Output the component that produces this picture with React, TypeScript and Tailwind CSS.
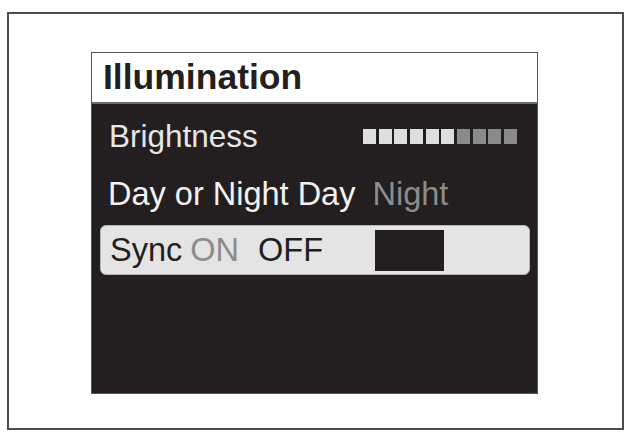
const font = { fontFamily: '"Liberation Sans", Arial, Helvetica, sans-serif' };

function BrightnessBar({ level, total }: { level: number; total: number }) {
  return (
    <div className="flex gap-[2.7px]">
      {Array.from({ length: total }).map((_, i) => (
        <div
          key={i}
          className={
            i < level
              ? "w-[13px] h-[15px] bg-[#dedede]"
              : "w-[13px] h-[15px] bg-[#8a8a8a]"
          }
        />
      ))}
    </div>
  );
}

export default function App() {
  return (
    <div className="w-[626px] h-[435px] bg-white pt-[12px] pl-[7px]" style={font}>
      <div className="w-[617px] h-[418px] border-2 border-[#4d4d4d] pl-[82px] pt-[38px]">
        {/* screen panel */}
        <div className="w-[447px] h-[342px] border border-[#555] bg-[#231f20] flex flex-col">
          <div className="h-[51px] bg-white border-b-2 border-[#6b6b6b] flex items-center pl-[11px]">
            <span className="text-[35.5px] leading-[35px] font-bold text-[#231f20]">
              Illumination
            </span>
          </div>

          <div className="mt-[11px] h-[43px] flex items-center justify-between pl-[17px] pr-[20px]">
            <span className="text-[31.5px] leading-[31px] text-[#e6e6e6]">Brightness</span>
            <BrightnessBar level={6} total={10} />
          </div>

          <div className="mt-[14px] h-[43px] flex items-center pl-[16px]">
            <span className="text-[32.5px] leading-[32px] text-[#f2f2f2]">Day or Night Day</span>
            <span className="ml-[17px] text-[32.5px] leading-[32px] text-[#8c8c8c]">Night</span>
          </div>

          <div className="mt-[10px] ml-[8px] mr-[7px] h-[50px] rounded-[6px] border border-[#b5b5b5] bg-[#e4e4e4] flex items-center pl-[9px]">
            <div className="w-[265px] flex items-center text-[32.5px] leading-[32px]">
              <span className="text-[#231f20]">Sync</span>
              <span className="ml-[8px] text-[#8c8c8c]">ON</span>
              <span className="ml-[19px] text-[#231f20]">OFF</span>
            </div>
            <div className="w-[69px] h-[41px] bg-[#231f20]" />
          </div>
        </div>
      </div>
    </div>
  );
}
